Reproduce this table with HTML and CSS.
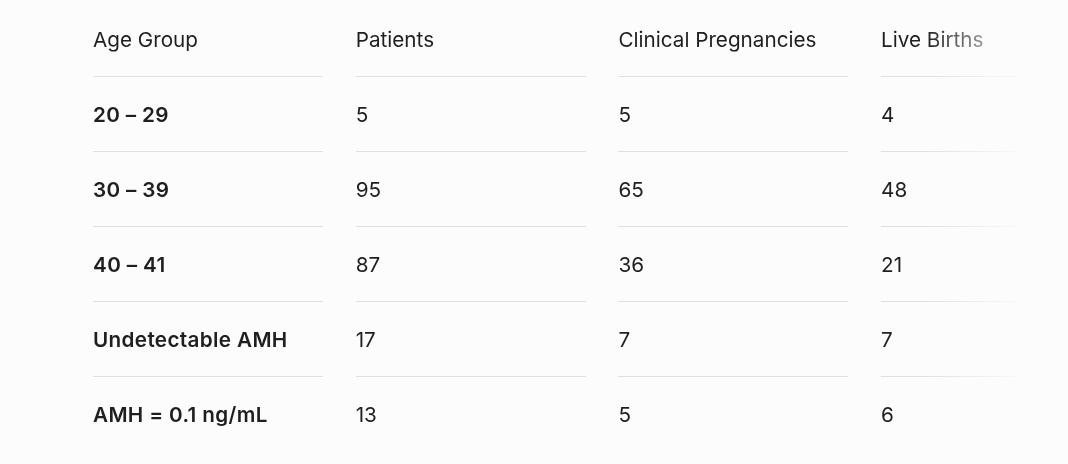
FILE: index.html
```html
<!DOCTYPE html>
<html lang="en">
<head>
<meta charset="utf-8">
<title>AMH outcomes</title>
<link rel="stylesheet" href="styles.css">
</head>
<body>
<div class="scroller">
  <div class="table">
    <div class="cell head">Age Group</div>
    <div class="cell head">Patients</div>
    <div class="cell head">Clinical Pregnancies</div>
    <div class="cell head">Live Births</div>

    <div class="cell label">20 – 29</div>
    <div class="cell">5</div>
    <div class="cell">5</div>
    <div class="cell">4</div>

    <div class="cell label">30 – 39</div>
    <div class="cell">95</div>
    <div class="cell">65</div>
    <div class="cell">48</div>

    <div class="cell label">40 – 41</div>
    <div class="cell">87</div>
    <div class="cell">36</div>
    <div class="cell">21</div>

    <div class="cell label">Undetectable AMH</div>
    <div class="cell">17</div>
    <div class="cell">7</div>
    <div class="cell">7</div>

    <div class="cell label last">AMH = 0.1 ng/mL</div>
    <div class="cell last">13</div>
    <div class="cell last">5</div>
    <div class="cell last">6</div>
  </div>
</div>
</body>
</html>
```

FILE: styles.css
```css
html, body {
  margin: 0;
  padding: 0;
  background: #fcfcfc;
}

body {
  font-family: Inter, Roboto, "Liberation Sans", sans-serif;
  color: #1f1f1f;
  font-size: 20.7px;
}

.scroller {
  width: 1016px;
  overflow: hidden;
  -webkit-mask-image: linear-gradient(to right, #000 925px, rgba(0,0,0,0.15) 1016px);
  mask-image: linear-gradient(to right, #000 925px, rgba(0,0,0,0.15) 1016px);
}

.table {
  display: grid;
  grid-template-columns: repeat(4, 230px);
  column-gap: 32.7px;
  padding: 3px 0 0 93px;
  width: max-content;
}

.cell {
  height: 74px;
  display: flex;
  align-items: center;
  border-bottom: 1px solid #e0e0e0;
  white-space: nowrap;
}

.table > .cell:nth-child(-n+4) {
  height: 73px;
}

.cell.last {
  border-bottom: none;
}

.head {
  font-weight: 400;
}

.label {
  font-weight: 600;
  letter-spacing: 0.35px;
}
```
